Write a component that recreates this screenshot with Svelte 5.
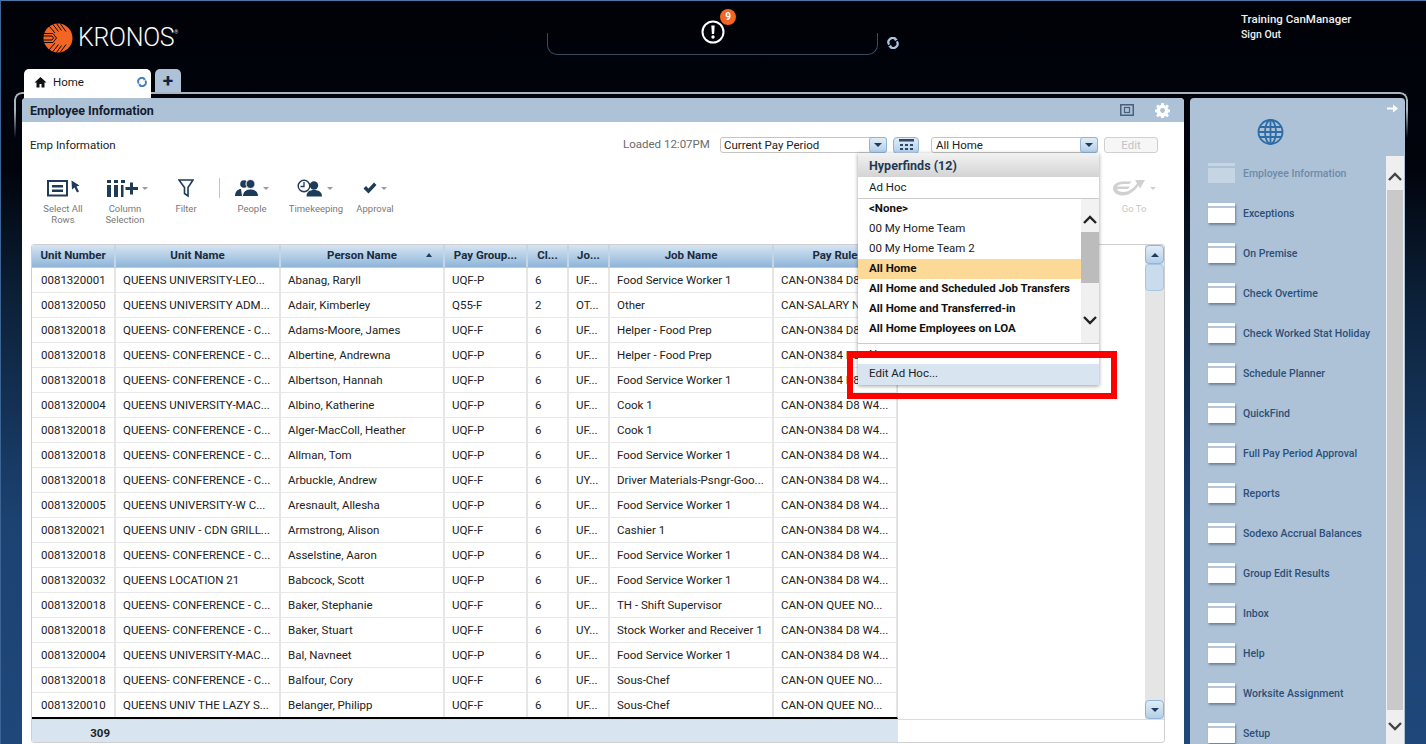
<script lang="ts">
	const columns = [
		{ label: 'Unit Number', width: 84 },
		{ label: 'Unit Name', width: 165 },
		{ label: 'Person Name', width: 164, sorted: true },
		{ label: 'Pay Group...', width: 83 },
		{ label: 'Cl...', width: 41 },
		{ label: 'Jo...', width: 41 },
		{ label: 'Job Name', width: 164 },
		{ label: 'Pay Rule', width: 124 }
	];

	const conf = 'QUEENS- CONFERENCE - C...';
	const w4 = 'CAN-ON384 D8 W4...';
	const no = 'CAN-ON QUEE NO...';
	const rows = [
		['0081320001', 'QUEENS UNIVERSITY-LEO...', 'Abanag, Raryll', 'UQF-P', '6', 'UF...', 'Food Service Worker 1', w4],
		['0081320050', 'QUEENS UNIVERSITY ADM...', 'Adair, Kimberley', 'Q55-F', '2', 'OT...', 'Other', 'CAN-SALARY NO...'],
		['0081320018', conf, 'Adams-Moore, James', 'UQF-F', '6', 'UF...', 'Helper - Food Prep', w4],
		['0081320018', conf, 'Albertine, Andrewna', 'UQF-P', '6', 'UF...', 'Helper - Food Prep', w4],
		['0081320018', conf, 'Albertson, Hannah', 'UQF-P', '6', 'UF...', 'Food Service Worker 1', w4],
		['0081320004', 'QUEENS UNIVERSITY-MAC...', 'Albino, Katherine', 'UQF-P', '6', 'UF...', 'Cook 1', w4],
		['0081320018', conf, 'Alger-MacColl, Heather', 'UQF-P', '6', 'UF...', 'Cook 1', w4],
		['0081320018', conf, 'Allman, Tom', 'UQF-P', '6', 'UF...', 'Food Service Worker 1', w4],
		['0081320018', conf, 'Arbuckle, Andrew', 'UQF-F', '6', 'UY...', 'Driver Materials-Psngr-Goo...', w4],
		['0081320005', 'QUEENS UNIVERSITY-W C...', 'Aresnault, Allesha', 'UQF-P', '6', 'UF...', 'Food Service Worker 1', w4],
		['0081320021', 'QUEENS UNIV - CDN GRILL...', 'Armstrong, Alison', 'UQF-F', '6', 'UF...', 'Cashier 1', w4],
		['0081320018', conf, 'Asselstine, Aaron', 'UQF-P', '6', 'UF...', 'Food Service Worker 1', w4],
		['0081320032', 'QUEENS LOCATION 21', 'Babcock, Scott', 'UQF-P', '6', 'UF...', 'Food Service Worker 1', w4],
		['0081320018', conf, 'Baker, Stephanie', 'UQF-F', '6', 'UF...', 'TH - Shift Supervisor', no],
		['0081320018', conf, 'Baker, Stuart', 'UQF-F', '6', 'UY...', 'Stock Worker and Receiver 1', w4],
		['0081320004', 'QUEENS UNIVERSITY-MAC...', 'Bal, Navneet', 'UQF-P', '6', 'UF...', 'Food Service Worker 1', w4],
		['0081320018', conf, 'Balfour, Cory', 'UQF-F', '6', 'UF...', 'Sous-Chef', no],
		['0081320010', 'QUEENS UNIV THE LAZY S...', 'Belanger, Philipp', 'UQF-F', '6', 'UF...', 'Sous-Chef', no]
	];

	const gridColumns = columns.map((c) => c.width + 'px').join(' ');

	const hyperfinds = [
		{ label: '<None>', bold: true },
		{ label: '00 My Home Team' },
		{ label: '00 My Home Team 2' },
		{ label: 'All Home', bold: true, selected: true },
		{ label: 'All Home and Scheduled Job Transfers', bold: true },
		{ label: 'All Home and Transferred-in', bold: true },
		{ label: 'All Home Employees on LOA', bold: true }
	];

	const workspaces = [
		'Employee Information', 'Exceptions', 'On Premise', 'Check Overtime', 'Check Worked Stat Holiday',
		'Schedule Planner', 'QuickFind', 'Full Pay Period Approval', 'Reports', 'Sodexo Accrual Balances',
		'Group Edit Results', 'Inbox', 'Help', 'Worksite Assignment', 'Setup'
	];
</script>

<div class="app">
	<header class="top">
		<div class="logo">
			<svg width="30" height="30" viewBox="0 0 30 30">
				<circle cx="15" cy="15" r="14.500" fill="#f26522" />
				<!-- left stripes, diagonals and the notch that leaves the arrow -->
				<path d="M0.500 10.500H10l3.500 4.500-3.500 4.500H0.500M0.500 13H9l1.500 2L9 17H0.500M6 3l6 7M9.500 1l6 7.500M13.500 0.500l5 7M6 27l6-7M9.500 29l6-7.500M13.500 29.500l5-7" fill="none" stroke="#10080a" stroke-width="1" />
				<path d="M17.500 1L23 8.500M23 21.500L17.500 29" fill="none" stroke="#10080a" stroke-width="1" />
			</svg>
			<span class="wordmark">KRONOS</span><sup class="reg">®</sup>
		</div>

		<div class="alerts">
			<div class="alert-box"></div>
			<div class="alert-icon">
				<svg width="24" height="24" viewBox="0 0 24 24">
					<circle cx="12" cy="12" r="10.500" fill="none" stroke="#fff" stroke-width="2" />
					<path d="M10.300 5.500h3.400l-.6 8.500h-2.200z" fill="#fff" />
					<circle cx="12" cy="17" r="1.700" fill="#fff" />
				</svg>
				<span class="alert-count">9</span>
			</div>
			<svg class="alert-refresh" width="12" height="12" viewBox="0 0 14 14">
				<path d="M2.500 9A5 5 0 0 1 10 2.500M11.500 5A5 5 0 0 1 4 11.500" fill="none" stroke="#a9c6e0" stroke-width="2.600" />
				<path d="M9 0l3.500 3L9 5zM5 14l-3.500-3L5 9z" fill="#a9c6e0" />
			</svg>
		</div>

		<div class="user">
			<div class="user-name">Training CanManager</div>
			<div class="sign-out">Sign Out</div>
		</div>
	</header>

	<nav class="tabs">
		<div class="tab">
			<svg width="13" height="12" viewBox="0 0 13 12"><path d="M6.500 1L0.500 6.500h2V11.500h3V8h2v3.500h3V6.500h2z" fill="#111" /></svg>
			<span class="tab-label">Home</span>
			<svg class="tab-refresh" width="10" height="10" viewBox="0 0 14 14">
				<path d="M2.500 9A5 5 0 0 1 10 2.500M11.500 5A5 5 0 0 1 4 11.500" fill="none" stroke="#3f7fc0" stroke-width="2.600" />
				<path d="M9 0l3.500 3L9 5zM5 14l-3.500-3L5 9z" fill="#3f7fc0" />
			</svg>
		</div>
		<div class="tab-add">+</div>
	</nav>

	<div class="frame-line"></div>

	<div class="workspace">
		<main class="panel">
			<div class="panel-title">
				<h1>Employee Information</h1>
				<svg class="maximize" width="14" height="12" viewBox="0 0 14 12">
					<rect x="0.750" y="0.750" width="12.500" height="10.500" fill="none" stroke="#47617c" stroke-width="1.500" />
					<rect x="4.500" y="3.500" width="5" height="5" fill="none" stroke="#47617c" stroke-width="1.200" />
				</svg>
				<svg class="gear" width="15" height="15" viewBox="0 0 15 15">
					<path d="M6.200 0h2.600l.3 2.100 1.300.6 1.700-1.300 1.800 1.800-1.300 1.700.6 1.300 2 .4v2.600l-2 .3-.6 1.300 1.300 1.700-1.800 1.800-1.700-1.300-1.300.6-.3 2H6.200l-.3-2-1.300-.6-1.700 1.300-1.800-1.800 1.300-1.700-.6-1.300-2-.3V6.600l2-.4.6-1.300-1.300-1.700 1.800-1.800 1.700 1.300 1.300-.6z" fill="#fff" />
					<circle cx="7.500" cy="7.500" r="2.400" fill="#adc2d7" />
				</svg>
			</div>

			<div class="controls">
				<span class="widget-name">Emp Information</span>
				<span class="loaded">Loaded 12:07PM</span>
				<div class="select period">
					<span>Current Pay Period</span>
					<span class="select-btn"><i class="caret"></i></span>
				</div>
				<div class="calendar-btn">
					<svg width="15" height="13" viewBox="0 0 15 13">
						<rect width="15" height="2.500" fill="#2b4a6b" />
						<path d="M1 5h3v2H1zM6 5h3v2H6zM11 5h3v2h-3zM1 9h3v2H1zM6 9h3v2H6zM11 9h3v2h-3z" fill="#2b4a6b" />
					</svg>
				</div>
				<div class="select home">
					<span>All Home</span>
					<span class="select-btn"><i class="caret"></i></span>
				</div>
				<div class="edit-btn">Edit</div>
			</div>

			<div class="toolbar">
				<div class="tool select-all">
					<svg width="33" height="17" viewBox="0 0 33 17">
						<rect x="1" y="1.500" width="19" height="14.500" fill="none" stroke="#1e3b5a" stroke-width="2" />
						<path d="M5 5.500h11v2.500H5zM5 10h11v2.500H5z" fill="#1e3b5a" />
						<path d="M24.500 1l8 5-3 1 2.500 5-2 1-2.500-5-2.500 2z" fill="#1e3b5a" />
					</svg>
					<span>Select All<br />Rows</span>
				</div>
				<div class="tool column">
					<div class="tool-icon">
						<svg width="31" height="17" viewBox="0 0 31 17">
							<path d="M0 0h4v3H0zM0 5h4v12H0zM7 0h4v3H7zM7 5h4v12H7zM14 0h4v3h-4zM14 5h2.500v12H14z" fill="#1e3b5a" />
							<path d="M18.500 7H23V2.500h3V7h5v3h-5v4.500h-3V10h-4.500z" fill="#1e3b5a" />
						</svg>
						<i class="tool-caret"></i>
					</div>
					<span>Column<br />Selection</span>
				</div>
				<div class="tool filter">
					<svg width="16" height="18" viewBox="0 0 16 18">
						<path d="M1 1h14L10 8.500V17L6.500 14.500V8.500z" fill="none" stroke="#1e3b5a" stroke-width="1.600" />
					</svg>
					<span>Filter</span>
				</div>
				<div class="tool-sep"></div>
				<div class="tool people">
					<div class="tool-icon">
						<svg width="24" height="18" viewBox="0 0 24 18">
							<circle cx="9" cy="5" r="3.800" fill="#1e3b5a" />
							<path d="M0 17c0-4.500 3-7 6-7l1 7z" fill="#1e3b5a" />
							<circle cx="15.500" cy="5" r="4.500" fill="#1e3b5a" stroke="#fff" stroke-width="1" />
							<path d="M7.500 17.500c0-5 3.500-7.500 8-7.500s8 2.500 8 7.500z" fill="#1e3b5a" stroke="#fff" stroke-width="1" />
						</svg>
						<i class="tool-caret"></i>
					</div>
					<span>People</span>
				</div>
				<div class="tool timekeeping">
					<div class="tool-icon">
						<svg width="26" height="18" viewBox="0 0 26 18">
							<circle cx="7" cy="7" r="5.800" fill="none" stroke="#1e3b5a" stroke-width="1.400" />
							<path d="M7 3v4.500H3.500" fill="none" stroke="#1e3b5a" stroke-width="1.300" />
							<circle cx="17" cy="6.500" r="4.200" fill="#1e3b5a" />
							<path d="M9.500 17.500c0-4.500 3-6.500 7.500-6.500s8 2 8 6.500z" fill="#1e3b5a" />
						</svg>
						<i class="tool-caret"></i>
					</div>
					<span>Timekeeping</span>
				</div>
				<div class="tool approval">
					<div class="tool-icon">
						<svg width="14" height="12" viewBox="0 0 14 12">
							<path d="M0.500 6.500L3 4l2.500 2.500L11 0.500l2.500 2.500-8 8.500z" fill="#1e3b5a" />
						</svg>
						<i class="tool-caret"></i>
					</div>
					<span>Approval</span>
				</div>
				<div class="tool goto">
					<div class="tool-icon">
						<svg width="34" height="20" viewBox="0 0 34 20">
							<path d="M23 2h10l-5 8.500-1.500-3C22 14 16 18 10 17.500 4.500 17 1 14 1 10.500 1 6 6 3.500 12 3.500h8l-3 2.500h-5C8 6 5.500 7 5 8.500h13l-2 2.500H5c.5 2 3 3 6 3 5.500 0 10-3 14-8.500z" fill="#d0d0d0" />
						</svg>
						<i class="tool-caret light"></i>
					</div>
					<span>Go To</span>
				</div>
			</div>

			<div class="table-wrap">
				<div class="table-main">
					<div class="grid-side">
						<div class="grid-row grid-head" style="grid-template-columns: {gridColumns}">
							{#each columns as col}
								<div class="head-cell">
									{col.label}
									{#if col.sorted}<i class="sort-caret"></i>{/if}
								</div>
							{/each}
						</div>
						<div class="grid-body">
							{#each rows as row}
								<div class="grid-row" style="grid-template-columns: {gridColumns}">
									{#each row as cell}
										<div class="cell">{cell}</div>
									{/each}
								</div>
							{/each}
						</div>
					</div>
					<div class="table-empty"></div>
					<div class="v-scroll">
						<div class="scroll-btn"><i class="caret up"></i></div>
						<div class="scroll-thumb"></div>
						<div class="scroll-space"></div>
						<div class="scroll-btn"><i class="caret"></i></div>
					</div>
				</div>
				<div class="table-foot">
					<div class="total"><span>309</span></div>
				</div>
			</div>

			<div class="dropdown">
				<div class="dd-head">Hyperfinds (12)</div>
				<div class="dd-adhoc">Ad Hoc</div>
				<div class="dd-list">
					<div class="dd-items">
						{#each hyperfinds as item}
							<div class="dd-item" class:bold={item.bold} class:selected={item.selected}>{item.label}</div>
						{/each}
					</div>
					<div class="dd-scroll">
						<svg width="16" height="33" viewBox="0 0 16 33"><path d="M2 24l6-6 6 6" fill="none" stroke="#222" stroke-width="2.400" /></svg>
						<div class="dd-thumb"></div>
						<div class="dd-track">
							<svg width="16" height="12" viewBox="0 0 16 12"><path d="M2 2l6 6 6-6" fill="none" stroke="#222" stroke-width="2.400" /></svg>
						</div>
					</div>
				</div>
				<div class="dd-new">New</div>
				<div class="dd-edit">Edit Ad Hoc...</div>
			</div>
			<div class="callout"></div>
		</main>

		<aside class="side">
			<svg class="collapse" width="11" height="9" viewBox="0 0 11 9"><path d="M0 3.500h6V0.500l5 4-5 4v-3H0z" fill="#fff" /></svg>
			<div class="globe">
				<svg width="27" height="26" viewBox="0 0 27 26" fill="none" stroke="#2d6ca6" stroke-width="1.800">
					<circle cx="13.500" cy="13" r="12" />
					<ellipse cx="13.500" cy="13" rx="5.500" ry="12" />
					<path d="M13.500 1v24M2.500 8h22M1.500 13h24M2.500 18h22" />
				</svg>
			</div>
			<div class="side-body">
				<ul class="side-list">
					{#each workspaces as name, i}
						<li class="side-item" class:current={i === 0}>
							<span class="win"><i></i></span>
							<span>{name}</span>
						</li>
					{/each}
				</ul>
				<div class="side-scroll">
					<svg width="16" height="34" viewBox="0 0 16 34"><path d="M2 24l6-6 6 6" fill="none" stroke="#444" stroke-width="2.400" /></svg>
					<div class="side-thumb"></div>
					<svg width="16" height="34" viewBox="0 0 16 34"><path d="M2 13l6 6 6-6" fill="none" stroke="#444" stroke-width="2.400" /></svg>
				</div>
			</div>
		</aside>
	</div>
</div>

<style>
	:global(body) {
		margin: 0;
		font-family: Roboto, "Liberation Sans", sans-serif;
		font-size: 11.500px;
		color: #222;
	}

	.app {
		position: relative;
		width: 1426px;
		height: 744px;
		overflow: hidden;
		box-sizing: border-box;
		border-top: 1px solid #4a76a8;
		border-left: 1px solid #3c6596;
		background: linear-gradient(#000208 0, #01040c 170px, #0c2139 300px, #1c4272 520px, #1f4779 744px);
	}

	/* header */
	.top {
		position: relative;
		height: 68px;
		display: flex;
	}
	.logo {
		display: flex;
		align-items: flex-start;
		padding: 22px 0 0 42px;
		width: 500px;
		box-sizing: border-box;
	}
	.wordmark {
		margin-left: 5px;
		line-height: 30px;
		font-family: Roboto, "Liberation Sans", sans-serif;
		font-size: 25px;
		font-weight: 300;
		letter-spacing: -0.300px;
		color: #fafafa;
	}
	.reg {
		font-size: 5px;
		line-height: 12px;
		margin: 3px 0 0 0;
		color: #ddd;
	}
	.alerts {
		position: absolute;
		left: 546px;
		top: 0;
		width: 360px;
		height: 68px;
	}
	.alert-box {
		width: 331px;
		height: 22px;
		margin-top: 32px;
		box-sizing: border-box;
		border: 1px solid #3a4a5e;
		border-top: none;
		border-radius: 0 0 10px 10px;
	}
	.alert-icon {
		position: absolute;
		left: 154px;
		top: 19px;
		width: 24px;
		height: 24px;
	}
	.alert-count {
		position: absolute;
		left: 19px;
		top: -11px;
		width: 16px;
		height: 16px;
		border-radius: 50%;
		background: #f26522;
		color: #fff;
		font-size: 10px;
		font-weight: 700;
		line-height: 16px;
		text-align: center;
	}
	.alert-refresh {
		position: absolute;
		left: 340px;
		top: 36px;
	}
	.user {
		position: absolute;
		left: 1240px;
		top: 11px;
		color: #f0f0f0;
		font-weight: 500;
	}
	.user-name { line-height: 15px; }
	.sign-out {
		font-size: 10.500px;
		line-height: 15px;
	}

	/* tabs */
	.tabs {
		display: flex;
		gap: 4px;
		height: 23px;
		padding-left: 23px;
	}
	.tab {
		position: relative;
		z-index: 3;
		display: flex;
		align-items: flex-start;
		box-sizing: border-box;
		width: 127px;
		height: 29px;
		padding: 7px 4px 0 10px;
		background: #fff;
		border-radius: 5px 5px 0 0;
		font-size: 11.500px;
	}
	.tab-label {
		margin-left: 6px;
		line-height: 13px;
		color: #1a1a1a;
	}
	.tab-refresh {
		margin: 1px 0 0 auto;
	}
	.tab-add {
		width: 26px;
		height: 23px;
		background: #adc2d7;
		border-radius: 5px 5px 0 0;
		color: #12233a;
		font-size: 19px;
		font-weight: 700;
		line-height: 24px;
		text-align: center;
	}

	/* the rim fades out down the sides of the workspace */
	.frame-line {
		position: absolute;
		left: 13px;
		top: 91px;
		width: 1394px;
		height: 46px;
		box-sizing: border-box;
		border: 2px solid #aab4bf;
		border-bottom: none;
		border-radius: 8px 8px 0 0;
		-webkit-mask-image: linear-gradient(#000 40%, transparent);
		mask-image: linear-gradient(#000 40%, transparent);
	}

	.workspace {
		position: relative;
		z-index: 1;
		display: flex;
		gap: 6px;
		height: 646px;
		margin-top: 6px;
		padding-left: 21px;
	}

	/* main panel */
	.panel {
		position: relative;
		display: flex;
		flex-direction: column;
		width: 1162px;
		background: #fff;
		border-radius: 4px 4px 0 0;
	}
	.panel-title {
		display: flex;
		align-items: center;
		flex: none;
		height: 24px;
		padding: 0 14px 0 8px;
		background: #adc2d7;
		border-radius: 4px 4px 0 0;
	}
	h1 {
		flex: 1;
		margin: 1px 0 0;
		font-size: 12.500px;
		font-weight: 700;
		color: #14202e;
	}
	.gear { margin-left: 21px; }

	.controls {
		display: flex;
		align-items: center;
		flex: none;
		height: 20px;
		margin-top: 13px;
		padding-left: 8px;
	}
	.widget-name { width: 593px; }
	.loaded {
		width: 97px;
		margin-bottom: 2px;
		color: #6c6c6c;
	}
	.select {
		display: flex;
		align-items: center;
		box-sizing: border-box;
		height: 16px;
		padding-left: 3px;
		border: 1px solid #c4c4c4;
		border-radius: 3px;
		color: #222;
	}
	.select span:first-child { flex: 1; }
	.select.period { width: 167px; }
	.select.home {
		width: 167px;
		margin-left: 12px;
		padding-left: 4px;
	}
	.select-btn {
		display: flex;
		align-items: center;
		justify-content: center;
		width: 18px;
		height: 16px;
		margin-right: -1px;
		box-sizing: border-box;
		border: 1px solid #8fb5d9;
		border-radius: 3px;
		background: linear-gradient(#e1ecf6, #b4cfe8);
	}
	.caret {
		display: block;
		width: 0;
		height: 0;
		border-left: 4px solid transparent;
		border-right: 4px solid transparent;
		border-top: 4px solid #1e3b5a;
	}
	.caret.up {
		border-top: none;
		border-bottom: 4px solid #1e3b5a;
	}
	.calendar-btn {
		display: flex;
		align-items: center;
		justify-content: center;
		width: 26px;
		height: 17px;
		margin-left: 6px;
		box-sizing: border-box;
		border: 1px solid #8fb5d9;
		border-radius: 4px;
		background: linear-gradient(#e1ecf6, #b4cfe8);
	}
	.edit-btn {
		width: 54px;
		height: 16px;
		margin-left: 6px;
		box-sizing: border-box;
		border: 1px solid #d0d0d0;
		border-radius: 3px;
		background: #f6f6f6;
		color: #c4c4c4;
		line-height: 14px;
		text-align: center;
	}

	/* toolbar */
	.toolbar {
		position: relative;
		display: flex;
		flex: none;
		height: 66px;
		margin-top: 23px;
		padding-left: 16px;
	}
	.tool {
		display: flex;
		flex-direction: column;
		align-items: center;
		font-size: 9.500px;
		line-height: 11px;
		text-align: center;
		color: #7a7a7a;
	}
	.tool > svg, .tool-icon {
		height: 20px;
		margin-bottom: 5px;
	}
	.tool-icon {
		display: flex;
		align-items: center;
	}
	.tool-caret {
		width: 0;
		height: 0;
		margin-left: 4px;
		border-left: 3px solid transparent;
		border-right: 3px solid transparent;
		border-top: 3px solid #9a9a9a;
	}
	.tool-caret.light { border-top-color: #d0d0d0; }
	.select-all { width: 50px; }
	.column { width: 46px; margin-left: 14px; }
	.column .tool-icon { margin-left: 5px; }
	.filter { width: 22px; margin-left: 27px; }
	.tool-sep {
		width: 1px;
		height: 20px;
		margin-left: 22px;
		background: #c4c4c4;
	}
	.people { width: 36px; margin-left: 14px; }
	.timekeeping { width: 56px; margin-left: 18px; }
	.timekeeping .tool-icon { margin-right: 3px; }
	.approval { width: 40px; margin-left: 11px; }
	.goto {
		position: absolute;
		left: 1090px;
		top: 0;
		color: #c8c8c8;
	}

	/* table */
	.table-wrap {
		display: flex;
		flex-direction: column;
		width: 1134px;
		height: 499px;
		margin-left: 9px;
		box-sizing: border-box;
		border: 1px solid #d0d0d0;
		border-radius: 3px;
		overflow: hidden;
	}
	.table-main {
		display: flex;
		flex: none;
		height: 474px;
	}
	.grid-side {
		width: 866px;
		flex: none;
		border-bottom: 2px solid #000;
		box-sizing: border-box;
		border-right: 1px solid #ddd;
		overflow: hidden;
	}
	.grid-row {
		display: grid;
		height: 25px;
	}
	.grid-head {
		height: 22px;
		background: linear-gradient(#d6e5f3, #8fb5d9);
		border-bottom: 1px solid #c9c9c9;
	}
	.head-cell {
		position: relative;
		box-sizing: border-box;
		border-right: 2px solid #c5d5e5;
		font-weight: 700;
		font-size: 11.500px;
		line-height: 20px;
		text-align: center;
		color: #1b2c40;
		white-space: nowrap;
		overflow: hidden;
	}
	.sort-caret {
		position: absolute;
		right: 11px;
		top: 8px;
		border-left: 3.500px solid transparent;
		border-right: 3.500px solid transparent;
		border-bottom: 4px solid #1e3b5a;
	}
	.cell {
		box-sizing: border-box;
		padding-left: 7px;
		border-right: 2px solid #e6e6e6;
		border-bottom: 1px solid #e8e8e8;
		line-height: 25px;
		white-space: nowrap;
		overflow: hidden;
		color: #222;
	}
	.cell:first-child { padding-left: 9px; }
	.table-empty { flex: 1; }
	.v-scroll {
		display: flex;
		flex-direction: column;
		width: 19px;
		background: #e5e5e5;
	}
	.scroll-btn {
		display: flex;
		align-items: center;
		justify-content: center;
		height: 19px;
		flex: none;
		box-sizing: border-box;
		border: 1px solid #8fb5d9;
		border-radius: 4px;
		background: linear-gradient(#e1ecf6, #b4cfe8);
	}
	.scroll-thumb {
		height: 27px;
		flex: none;
		box-sizing: border-box;
		border: 1px solid #a9c6e0;
		border-radius: 4px;
		background: #c9dcee;
	}
	.scroll-space { flex: 1; }
	.table-foot {
		flex: 1;
		min-height: 0;
		border-top: 1px solid #ddd;
	}
	.total {
		width: 866px;
		height: 100%;
		box-sizing: border-box;
		background: #d8e4f0;
		font-weight: 700;
		line-height: 27px;
		color: #222;
	}
	.total span {
		display: block;
		width: 78px;
		text-align: right;
	}

	/* hyperfinds dropdown */
	.dropdown {
		position: absolute;
		left: 836px;
		top: 55px;
		z-index: 5;
		width: 241px;
		background: #fff;
		box-shadow: 0 1px 4px rgba(0, 0, 0, 0.4);
	}
	.dd-head {
		height: 24px;
		padding-left: 11px;
		background: linear-gradient(#f2f2f2, #d4d4d4);
		font-size: 12.500px;
		font-weight: 700;
		line-height: 25px;
		color: #1f3a57;
	}
	.dd-adhoc {
		height: 21px;
		padding-left: 11px;
		border-bottom: 1px solid #ccc;
		line-height: 20px;
	}
	.dd-list {
		display: flex;
		height: 144px;
		border-bottom: 1px solid #ccc;
	}
	.dd-items { flex: 1; }
	.dd-item {
		height: 20px;
		padding-left: 11px;
		line-height: 19px;
		color: #222;
	}
	.dd-item.bold {
		font-weight: 700;
		color: #111;
	}
	.dd-item.selected { background: #fdd998; }
	.dd-scroll {
		display: flex;
		flex-direction: column;
		align-items: center;
		width: 18px;
		background: #f2f2f2;
	}
	.dd-scroll > svg { flex: none; }
	.dd-thumb {
		width: 100%;
		height: 51px;
		flex: none;
		background: #bcbcbc;
	}
	.dd-track {
		flex: 1;
		width: 100%;
		display: flex;
		align-items: flex-end;
		justify-content: center;
		padding-bottom: 16px;
		box-sizing: border-box;
		background: #f0f0f0;
	}
	.dd-new {
		height: 20px;
		padding-left: 11px;
		line-height: 20px;
	}
	.dd-edit {
		height: 21px;
		padding-left: 11px;
		background: #d8e4f0;
		line-height: 19px;
	}
	.callout {
		position: absolute;
		left: 825px;
		top: 253px;
		z-index: 6;
		width: 270px;
		height: 48px;
		box-sizing: border-box;
		border: 6px solid #f00;
		border-top-width: 7px;
	}

	/* workspace sidebar */
	.side {
		position: relative;
		display: flex;
		flex-direction: column;
		width: 215px;
		box-sizing: border-box;
		background: #adc2d7;
		border-radius: 4px 4px 0 0;
	}
	.collapse {
		position: absolute;
		right: 7px;
		top: 6px;
	}
	.globe {
		flex: none;
		height: 58px;
		box-sizing: border-box;
		padding: 21px 0 0 67px;
	}
	.side-body {
		flex: 1;
		display: flex;
		min-height: 0;
	}
	.side-list {
		flex: 1;
		margin: -3px 0 0;
		padding: 0;
		list-style: none;
		overflow: hidden;
	}
	.side-item {
		display: flex;
		align-items: center;
		gap: 8px;
		height: 40px;
		padding: 0 0 0 18px;
		font-size: 10.500px;
		font-weight: 500;
		color: #2c5079;
		white-space: nowrap;
	}
	.side-item.current { color: #6e8aa8; }
	.win {
		display: block;
		width: 27px;
		height: 20px;
		background: #fff;
		box-shadow: 1px 2px 2px rgba(50, 70, 95, 0.5);
	}
	.win i {
		display: block;
		height: 3px;
		margin-top: 0;
		border-bottom: 2px solid #b5c7d9;
	}
	.current .win {
		background: #c6d5e4;
		box-shadow: none;
	}
	.current .win i { border-bottom-color: #adc2d7; }
	.side-scroll {
		display: flex;
		flex-direction: column;
		align-items: center;
		justify-content: space-between;
		width: 18px;
		background: #efefef;
		margin-right: 1px;
	}
	.side-scroll svg { flex: none; }
	.side-thumb {
		flex: 1;
		width: 16px;
		background: #c9c9c9;
	}
</style>
